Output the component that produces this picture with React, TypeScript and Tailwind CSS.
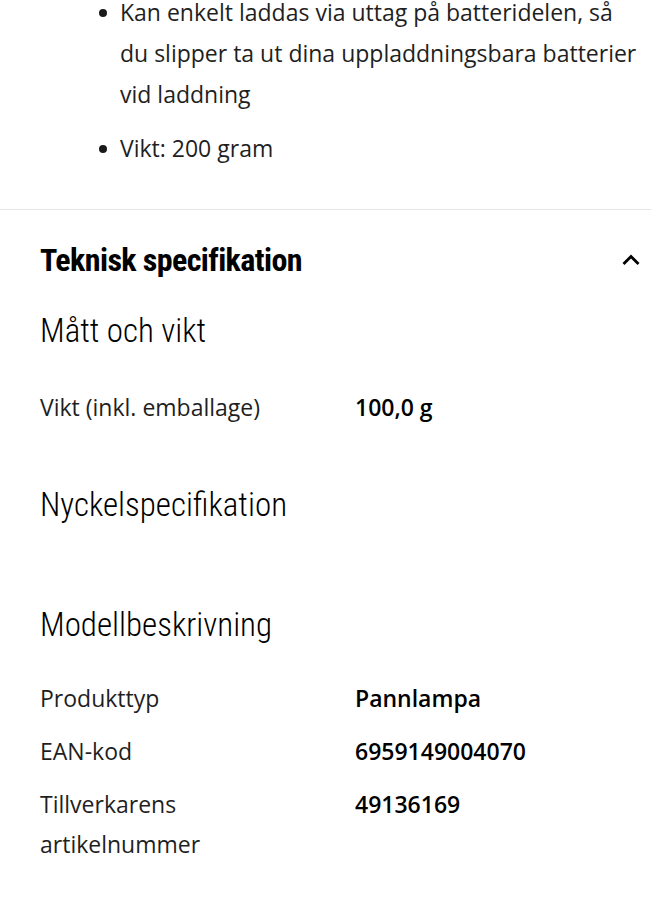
import React from "react";

const body = { fontFamily: '"Open Sans", "Noto Sans", sans-serif' };
const head = { fontFamily: '"Roboto Condensed", "Roboto", sans-serif' };

function Row({ label, value }: { label: React.ReactNode; value: string }) {
  return (
    <div className="flex text-[23px] leading-[40px] text-[#1f1f1f]">
      <div className="w-[315px] shrink-0 pr-4">{label}</div>
      <div className="font-semibold text-black">{value}</div>
    </div>
  );
}

export default function App() {
  return (
    <div className="w-[651px] h-[900px] bg-white overflow-hidden" style={body}>
      <ul className="pl-[120px] pr-[9px] text-[23px] leading-[41px] text-[#1f1f1f] -mt-[8px]">
        <li className="relative">
          <span className="absolute -left-[21px] top-[17px] w-[8px] h-[8px] rounded-full bg-[#1a1a1a]" />
          Kan enkelt laddas via uttag på batteridelen, så du slipper ta ut dina uppladdningsbara batterier vid laddning
        </li>
        <li className="relative mt-[13px]">
          <span className="absolute -left-[21px] top-[17px] w-[8px] h-[8px] rounded-full bg-[#1a1a1a]" />
          Vikt: 200 gram
        </li>
      </ul>
      <div className="mt-[40px] border-t border-[#e6e6e6]" />
      <div className="pl-[40px] pr-[10px]">
        <div className="flex items-center justify-between mt-[30px] h-[40px]" style={head}>
          <h2 className="text-[32px] leading-[40px] font-bold text-black tracking-[-0.6px]">Teknisk specifikation</h2>
          <svg width="22" height="22" viewBox="0 0 22 22" className="-mr-[1px]">
            <path d="M3.5 15 L11 7.5 L18.5 15" fill="none" stroke="#000" strokeWidth="2.8" />
          </svg>
        </div>
        <h3 className="text-[33px] font-light text-black mt-[31px] leading-[40px]" style={head}>Mått och vikt</h3>
        <div className="mt-[36px]">
          <Row label="Vikt (inkl. emballage)" value="100,0 g" />
        </div>
        <h3 className="text-[33px] font-light text-black mt-[58px] leading-[40px]" style={head}>Nyckelspecifikation</h3>
        <h3 className="text-[33px] font-light text-black mt-[80px] leading-[40px]" style={head}>Modellbeskrivning</h3>
        <div className="mt-[33px] flex flex-col gap-[13px]">
          <Row label="Produkttyp" value="Pannlampa" />
          <Row label="EAN-kod" value="6959149004070" />
          <Row label={<span>Tillverkarens<br />artikelnummer</span>} value="49136169" />
        </div>
      </div>
    </div>
  );
}
